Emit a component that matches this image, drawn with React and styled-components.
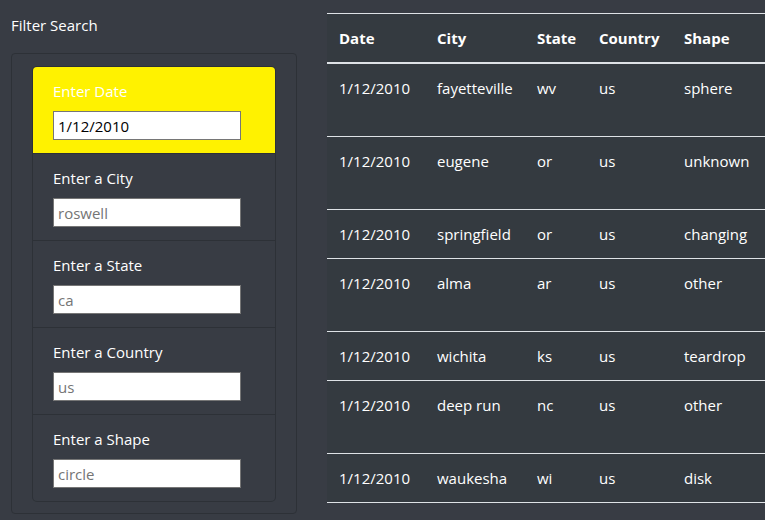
import React from "react";
import styled, { createGlobalStyle } from "styled-components";

const GlobalStyle = createGlobalStyle`
    html, body {
        margin: 0;
        padding: 0;
        background: #383c44;
        overflow: hidden;
    }
    body {
        font-family: "Open Sans", "Noto Sans", sans-serif;
        font-size: 16px;
        line-height: 24px;
        color: #fff;
    }
`;

const Page = styled.div`
    display: flex;
    align-items: flex-start;
    gap: 30px;
    width: 765px;
    height: 520px;
    padding-top: 13px;
    box-sizing: border-box;
    overflow: hidden;
`;

const Sidebar = styled.aside`
    flex: 0 0 286px;
    margin-left: 11px;
`;

const Title = styled.h5`
    margin: 0 0 16px;
    font-size: 15px;
    font-weight: 400;
    line-height: 24px;
`;

const Panel = styled.div`
    border: 1px solid #2d3137;
    border-radius: 4px;
    padding: 13px 21px 12px;
`;

const FilterList = styled.ul`
    list-style: none;
    margin: 0;
    padding: 0;
    border-radius: 4px;
    box-shadow: 0 0 0 1px #2d3137;
    overflow: hidden;
`;

const FilterItem = styled.li`
    padding: 12px 20px 13px;
    background: ${(p) => (p.$active ? "#fff200" : "transparent")};
    & + & {
        border-top: 1px solid #2d3137;
    }
`;

const Label = styled.label`
    display: block;
    margin-bottom: 8px;
    font-size: 15px;
    line-height: 24px;
`;

const Input = styled.input`
    display: block;
    width: 188px;
    height: 29px;
    box-sizing: border-box;
    padding: 0 4px;
    border: 1px solid #767676;
    border-radius: 0;
    background: #fff;
    color: #000;
    font-family: inherit;
    font-size: 15px;

    &::placeholder {
        color: #757575;
    }
`;

const TableWrap = styled.main`
    flex: 1;
    min-width: 0;
    overflow: hidden;
`;

const Table = styled.table`
    width: 520px;
    border-collapse: collapse;
    table-layout: fixed;
    background: #343a40;
    color: #fff;
`;

const HeadCell = styled.th`
    box-sizing: border-box;
    width: ${(p) => p.$w}px;
    padding: 12px;
    text-align: left;
    font-weight: 700;
    font-size: 15px;
    line-height: 24px;
    border-top: 1px solid #dee2e6;
    border-bottom: 2px solid #dee2e6;
`;

const Row = styled.tr`
    height: ${(p) => (p.$tall ? 73 : 48)}px;
    border-bottom: 1px solid #dee2e6;
`;

const Cell = styled.td`
    padding: 12px;
    vertical-align: top;
    font-size: 15px;
    line-height: 24px;
    white-space: nowrap;
`;

const filters = [
    { label: "Enter Date", value: "1/12/2010", active: true },
    { label: "Enter a City", placeholder: "roswell" },
    { label: "Enter a State", placeholder: "ca" },
    { label: "Enter a Country", placeholder: "us" },
    { label: "Enter a Shape", placeholder: "circle" },
];

const columns = [
    { name: "Date", w: 98 },
    { name: "City", w: 100 },
    { name: "State", w: 62 },
    { name: "Country", w: 85 },
    { name: "Shape", w: 175 },
];

const sightings = [
    { date: "1/12/2010", city: "fayetteville", state: "wv", country: "us", shape: "sphere", tall: true },
    { date: "1/12/2010", city: "eugene", state: "or", country: "us", shape: "unknown", tall: true },
    { date: "1/12/2010", city: "springfield", state: "or", country: "us", shape: "changing" },
    { date: "1/12/2010", city: "alma", state: "ar", country: "us", shape: "other", tall: true },
    { date: "1/12/2010", city: "wichita", state: "ks", country: "us", shape: "teardrop" },
    { date: "1/12/2010", city: "deep run", state: "nc", country: "us", shape: "other", tall: true },
    { date: "1/12/2010", city: "waukesha", state: "wi", country: "us", shape: "disk" },
];

const App = () => {
    return (
        <>
            <GlobalStyle />
            <Page>
                <Sidebar>
                    <Title>Filter Search</Title>
                    <Panel>
                        <FilterList>
                            {filters.map((f) => (
                                <FilterItem key={f.label} $active={f.active}>
                                    <Label>{f.label}</Label>
                                    <Input
                                        type="text"
                                        defaultValue={f.value}
                                        placeholder={f.placeholder}
                                    />
                                </FilterItem>
                            ))}
                        </FilterList>
                    </Panel>
                </Sidebar>
                <TableWrap>
                    <Table>
                        <thead>
                            <tr>
                                {columns.map((c) => (
                                    <HeadCell key={c.name} $w={c.w}>{c.name}</HeadCell>
                                ))}
                            </tr>
                        </thead>
                        <tbody>
                            {sightings.map((s, i) => (
                                <Row key={i} $tall={s.tall}>
                                    <Cell>{s.date}</Cell>
                                    <Cell>{s.city}</Cell>
                                    <Cell>{s.state}</Cell>
                                    <Cell>{s.country}</Cell>
                                    <Cell>{s.shape}</Cell>
                                </Row>
                            ))}
                        </tbody>
                    </Table>
                </TableWrap>
            </Page>
        </>
    );
};

export default App;
